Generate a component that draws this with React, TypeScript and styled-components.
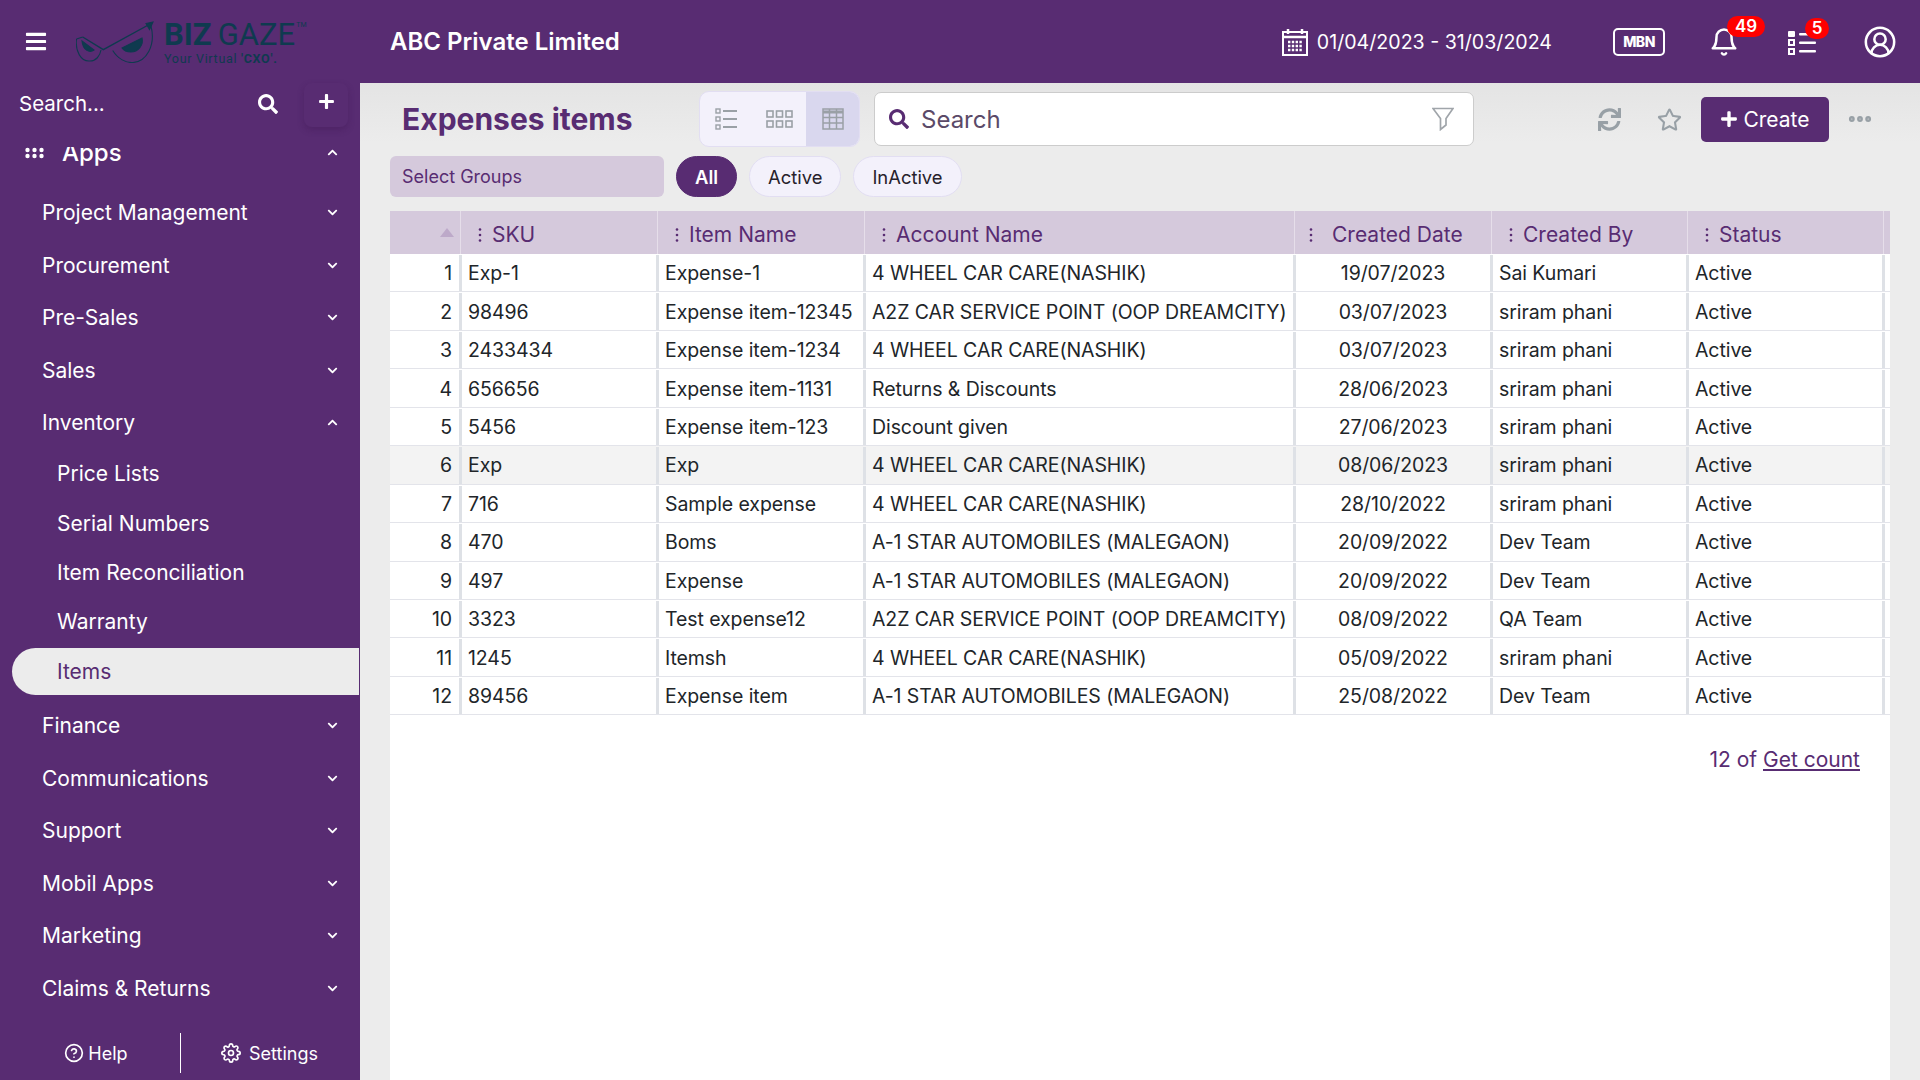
import React from 'react';
import styled, { createGlobalStyle } from 'styled-components';
import { FaBars, FaSearch, FaPlus, FaChevronDown, FaChevronUp, FaSync, FaRegStar } from 'react-icons/fa';
import { FiMoreHorizontal, FiHelpCircle, FiSettings } from 'react-icons/fi';
import { LuBell, LuCircleUserRound } from 'react-icons/lu';

const purple = '#582c72';
const lilac = '#d5c9dc';
const columns = '71px 197px 207px 430px 197px 196px 196px 6px';
const rowColumns = '71px 197px 207px 430px 197px 196px 196px 5px';

const GlobalStyle = createGlobalStyle`
  html, body { margin: 0; padding: 0; height: 100%; }
  body { font-family: Inter, "Noto Sans", sans-serif; overflow: hidden; }
  * { box-sizing: border-box; }
`;

const Page = styled.div`
  width: 1920px;
  height: 1080px;
  display: flex;
  flex-direction: column;
  background: ${purple};
  overflow: hidden;
`;

const TopBar = styled.header`
  height: 83px;
  flex: none;
  display: flex;
  align-items: center;
  padding-left: 25px;
  color: #fff;
`;

const Burger = styled.div`
  width: 22px;
  font-size: 23px;
  display: flex;
`;

const Logo = styled.div`
  width: 244px;
  margin-left: 29px;
  margin-right: 70px;
  display: flex;
  align-items: flex-start;
  gap: 8px;
  height: 42px;
`;

const LogoText = styled.div`
  color: #0f3a4f;
  font-family: Roboto, sans-serif;
`;

const LogoName = styled.div`
  font-size: 31px;
  line-height: 26px;
  margin-top: 1px;
  white-space: nowrap;
  b { font-weight: 700; margin-right: 6px; }
  span { font-weight: 400; }
  sup { font-size: 7px; line-height: 0; vertical-align: 18px; margin-left: 1px; }
`;

const LogoTag = styled.div`
  font-size: 12.5px;
  line-height: 14px;
  margin-top: 4px;
  letter-spacing: 0.7px;
  white-space: nowrap;
  b { font-weight: 700; }
`;

const Company = styled.div`
  font-size: 24px;
  font-weight: 600;
  flex: 1;
`;

const DateRange = styled.div`
  display: flex;
  align-items: center;
  gap: 9px;
  font-size: 19.6px;
  margin-right: 61px;
`;

const Mbn = styled.div`
  width: 52px;
  height: 28px;
  border: 2.5px solid #fff;
  border-radius: 5px;
  font-size: 14px;
  font-weight: 800;
  letter-spacing: -0.5px;
  display: flex;
  align-items: center;
  justify-content: center;
  margin-right: 44px;
`;

const IconSlot = styled.div<{ $gap: number }>`
  position: relative;
  display: flex;
  margin-right: ${p => p.$gap}px;
`;

const Badge = styled.span<{ $left: number; $width: number }>`
  position: absolute;
  top: -11px;
  left: ${p => p.$left}px;
  width: ${p => p.$width}px;
  height: 21px;
  background: #f00;
  border-radius: 11px;
  color: #fff;
  font-size: 17px;
  font-weight: 600;
  line-height: 21px;
  text-align: center;
`;

const Body = styled.div`
  flex: 1;
  display: flex;
  min-height: 0;
`;

const Sidebar = styled.aside`
  width: 360px;
  flex: none;
  display: flex;
  flex-direction: column;
  color: #fff;
  position: relative;
`;

const SideSearch = styled.div`
  height: 64px;
  flex: none;
  display: flex;
  align-items: flex-start;
  padding: 8px 12px 0 19px;
  font-size: 20.5px;
  position: relative;
  z-index: 1;
  background: ${purple};
`;

const SideSearchLabel = styled.div`
  flex: 1;
  line-height: 26px;
`;

const SideSearchIcon = styled.div`
  font-size: 20px;
  display: flex;
  margin: 3px 26px 0 0;
`;

const AddBox = styled.div`
  width: 44px;
  height: 44px;
  margin-top: -8px;
  border-radius: 8px;
  display: flex;
  align-items: center;
  justify-content: center;
  font-size: 17px;
  padding-bottom: 8px;
  box-shadow: 0 3px 6px rgba(60, 20, 80, 0.35);
`;

const NavScroll = styled.nav`
  flex: 1;
  min-height: 0;
  overflow: hidden;
`;

const NavList = styled.div`
  margin-top: -21px;
`;

const NavRow = styled.div`
  height: 52.5px;
  display: flex;
  align-items: center;
  padding: 0 22px 0 42px;
  font-size: 21px;
  svg { font-size: 11px; }
`;

const AppsRow = styled(NavRow)`
  margin-bottom: 8px;
  padding-left: 62px;
  font-size: 24px;
  font-weight: 500;
  position: relative;
`;

const NavLabel = styled.span`
  flex: 1;
`;

const AppsDots = styled.svg`
  position: absolute;
  left: 25px;
  top: 21px;
  width: 20px;
  height: 12px;
`;

const SubRow = styled.div<{ $active?: boolean }>`
  height: 49.4px;
  display: flex;
  align-items: center;
  font-size: 21px;
  padding-left: ${p => (p.$active ? 45 : 57)}px;
  ${p => p.$active && `
    margin: 1px 1px 5px 12px;
    height: 47px;
    background: #ececec;
    color: ${purple};
    border-radius: 24px 0 0 24px;
  `}
`;

const SideFooter = styled.div`
  position: absolute;
  left: 0;
  right: 0;
  bottom: 7px;
  height: 40px;
  background: ${purple};
  display: grid;
  grid-template-columns: 180px 1fr;
  font-size: 18px;
`;

const FooterItem = styled.div<{ $divider?: boolean }>`
  display: flex;
  align-items: center;
  justify-content: center;
  gap: ${p => (p.$divider ? 8 : 4)}px;
  padding: 0 ${p => (p.$divider ? 2 : 0)}px 0 ${p => (p.$divider ? 0 : 12)}px;
  border-left: ${p => (p.$divider ? '1px solid #fff' : 'none')};
  svg { font-size: 20px; }
`;

const Main = styled.main`
  flex: 1;
  min-width: 0;
  display: flex;
  flex-direction: column;
  padding: 8px 30px 0;
  background: linear-gradient(#e4e4e4, #ececec 60px);
`;

const TitleRow = styled.div`
  height: 56px;
  flex: none;
  display: flex;
  align-items: center;
`;

const Title = styled.h1`
  width: 309px;
  margin: 0;
  padding-left: 12px;
  font-size: 30px;
  font-weight: 700;
  color: ${purple};
  white-space: nowrap;
`;

const ViewToggle = styled.div`
  width: 161px;
  height: 56px;
  display: grid;
  grid-template-columns: 53px 53px 1fr;
  background: #f3f1fb;
  border: 1px solid #e2def2;
  border-radius: 10px;
  overflow: hidden;
  margin-right: 14px;
`;

const ViewButton = styled.div<{ $active?: boolean }>`
  display: flex;
  align-items: center;
  justify-content: center;
  background: ${p => (p.$active ? '#d9d7ee' : 'transparent')};
`;

const SearchBox = styled.div`
  width: 600px;
  height: 54px;
  background: #fff;
  border: 1px solid #ccc;
  border-radius: 7px;
  display: flex;
  align-items: center;
  padding: 0 19px 0 14px;
  color: ${purple};
  margin-right: 124px;
`;

const SearchLabel = styled.span`
  flex: 1;
  font-size: 24px;
  margin-left: 12px;
  color: #5b4a68;
`;

const ActionIcon = styled.div<{ $gap: number }>`
  display: flex;
  color: #98a0a6;
  margin-right: ${p => p.$gap}px;
`;

const CreateButton = styled.button`
  width: 128px;
  height: 45px;
  border: none;
  border-radius: 5px;
  background: ${purple};
  color: #fff;
  font-family: inherit;
  font-size: 21px;
  display: flex;
  align-items: center;
  justify-content: center;
  gap: 5px;
  margin-right: 17px;
  svg { font-size: 18px; }
`;

const FilterRow = styled.div`
  height: 41px;
  flex: none;
  margin-top: 9px;
  display: flex;
  gap: 12px;
`;

const GroupSelect = styled.div`
  width: 274px;
  background: ${lilac};
  border-radius: 6px;
  padding-left: 12px;
  display: flex;
  align-items: center;
  font-size: 18px;
  color: ${purple};
`;

const Pill = styled.div<{ $active?: boolean }>`
  padding: 0 ${p => (p.$active ? 18 : 18)}px;
  border-radius: 21px;
  display: flex;
  align-items: center;
  font-size: 18.4px;
  font-weight: ${p => (p.$active ? 600 : 400)};
  background: ${p => (p.$active ? purple : '#f3f1fb')};
  color: ${p => (p.$active ? '#fff' : '#27222b')};
  border: 1px solid ${p => (p.$active ? purple : '#e2def2')};
`;

const Panel = styled.section`
  flex: 1;
  margin-top: 14px;
  background: #fff;
`;

const HeadRow = styled.div`
  display: grid;
  grid-template-columns: ${columns};
  height: 43px;
  background: ${lilac};
`;

const HeadCell = styled.div<{ $gap?: number }>`
  display: flex;
  align-items: center;
  gap: ${p => p.$gap ?? 10}px;
  padding: 4px 0 0 ${p => (p.$gap ? 14 : 17)}px;
  border-right: 1px solid #e6deea;
  color: ${purple};
  font-size: 21px;
`;

const SortCell = styled.div`
  display: flex;
  align-items: center;
  justify-content: flex-end;
  padding-right: 6px;
  border-right: 1px solid #e6deea;
`;

const SortArrow = styled.div`
  width: 0;
  height: 0;
  border-left: 7px solid transparent;
  border-right: 7px solid transparent;
  border-bottom: 9px solid #bda9c9;
`;

const Kebab = styled.svg`
  width: 4px;
  height: 16px;
  flex: none;
`;

const DataRow = styled.div<{ $hover?: boolean }>`
  display: grid;
  grid-template-columns: ${rowColumns};
  height: 38.45px;
  padding: 1px 0 0 1px;
  border-bottom: 1px solid #e3e4ea;
  background: ${p => (p.$hover ? '#f3f3f3' : '#fff')};
`;

const Cell = styled.div<{ $align?: string }>`
  display: flex;
  align-items: center;
  justify-content: ${p => p.$align ?? 'flex-start'};
  padding: 0 ${p => (p.$align === 'flex-end' ? 7 : 0)}px 0 ${p => (p.$align ? 0 : 6)}px;
  border-right: 3px solid #dee1e6;
  color: #212529;
  font-size: 19.5px;
  white-space: nowrap;
  letter-spacing: -0.08px;
`;

const EndCell = styled.div``;

const Count = styled.div`
  margin-top: 32px;
  padding-right: 30px;
  text-align: right;
  font-size: 21px;
  color: ${purple};
  a { color: ${purple}; text-decoration: underline; }
`;

const topMenus = ['Project Management', 'Procurement', 'Pre-Sales', 'Sales'];
const subMenus = ['Price Lists', 'Serial Numbers', 'Item Reconciliation', 'Warranty'];
const bottomMenus = ['Finance', 'Communications', 'Support', 'Mobil Apps', 'Marketing', 'Claims & Returns'];

const rows = [
  ['Exp-1', 'Expense-1', '4 WHEEL CAR CARE(NASHIK)', '19/07/2023', 'Sai Kumari'],
  ['98496', 'Expense item-12345', 'A2Z CAR SERVICE POINT (OOP DREAMCITY)', '03/07/2023', 'sriram phani'],
  ['2433434', 'Expense item-1234', '4 WHEEL CAR CARE(NASHIK)', '03/07/2023', 'sriram phani'],
  ['656656', 'Expense item-1131', 'Returns & Discounts', '28/06/2023', 'sriram phani'],
  ['5456', 'Expense item-123', 'Discount given', '27/06/2023', 'sriram phani'],
  ['Exp', 'Exp', '4 WHEEL CAR CARE(NASHIK)', '08/06/2023', 'sriram phani'],
  ['716', 'Sample expense', '4 WHEEL CAR CARE(NASHIK)', '28/10/2022', 'sriram phani'],
  ['470', 'Boms', 'A-1 STAR AUTOMOBILES (MALEGAON)', '20/09/2022', 'Dev Team'],
  ['497', 'Expense', 'A-1 STAR AUTOMOBILES (MALEGAON)', '20/09/2022', 'Dev Team'],
  ['3323', 'Test expense12', 'A2Z CAR SERVICE POINT (OOP DREAMCITY)', '08/09/2022', 'QA Team'],
  ['1245', 'Itemsh', '4 WHEEL CAR CARE(NASHIK)', '05/09/2022', 'sriram phani'],
  ['89456', 'Expense item', 'A-1 STAR AUTOMOBILES (MALEGAON)', '25/08/2022', 'Dev Team'],
];

const KebabIcon = () => (
  <Kebab viewBox="0 0 4 16" fill={purple}>
    <circle cx="2" cy="2.5" r="1.3" />
    <circle cx="2" cy="8" r="1.3" />
    <circle cx="2" cy="13.5" r="1.3" />
  </Kebab>
);

const LogoMark = () => (
  <svg width="80" height="42" viewBox="0 0 80 42" fill="none" stroke="#0f3a4f" strokeWidth="1.1">
    <path d="M0.5 18 C-1 30 5 41 14 40 C20 40 24 35 25 29" />
    <path d="M0.5 18 L6.7 16" />
    <path d="M6 20 L18 29 C14 32 7 30 6 20 Z" fill="#0f3a4f" />
    <path d="M6.7 16 L27.3 28.7 L75 2.5" strokeWidth="1.4" />
    <path d="M70 2.5 L77 1 L73.5 8.5 Z" fill="#0f3a4f" />
    <path d="M36.7 29.5 C42 38 50 42 57 41.5 C70 41 80 25 75 5" />
    <path d="M46 27 L66 17 C68 24 62 31 55 31 C51 31 48 30 46 27 Z" fill="#0f3a4f" />
  </svg>
);

const CalendarIcon = () => (
  <svg width="26" height="28" viewBox="0 0 26 28" fill="none" stroke="#fff">
    <rect x="1" y="4" width="24" height="23" strokeWidth="2" />
    <path d="M1 9 H25" strokeWidth="2.5" />
    <path d="M6 1 V6 M20 1 V6" strokeWidth="2.5" />
    <path d="M6 14 H20 M6 18 H20 M6 22 H20" strokeWidth="2.4" strokeDasharray="2.4 1.4" />
  </svg>
);

const TaskIcon = () => (
  <svg width="28" height="26" viewBox="0 0 28 26" fill="#fff">
    <rect x="0" y="2" width="7" height="6" rx="1" />
    <rect x="1" y="11" width="5" height="5" fill="none" stroke="#fff" strokeWidth="2" />
    <rect x="1" y="20" width="5" height="5" fill="none" stroke="#fff" strokeWidth="2" />
    <rect x="11" y="4" width="15" height="2.6" rx="1" />
    <rect x="11" y="12.5" width="17" height="2.6" rx="1" />
    <rect x="11" y="21" width="17" height="2.6" rx="1" />
  </svg>
);

const ListViewIcon = () => (
  <svg width="23" height="22" viewBox="0 0 23 22" fill="none" stroke="#9aa0a6" strokeWidth="1.4">
    <rect x="1" y="1" width="4" height="4" />
    <rect x="1" y="9" width="4" height="4" />
    <rect x="1" y="17" width="4" height="4" />
    <path d="M8 3 H22 M8 11 H22 M8 19 H22" strokeWidth="1.8" />
  </svg>
);

const BoxViewIcon = () => (
  <svg width="27" height="20" viewBox="0 0 27 20" fill="none" stroke="#9aa0a6" strokeWidth="1.6">
    {[1, 10.5, 20].map(x =>
      [2, 12].map(y => <rect key={`${x}-${y}`} x={x} y={y} width="6" height="6" />)
    )}
  </svg>
);

const TableViewIcon = () => (
  <svg width="22" height="22" viewBox="0 0 22 22" fill="none" stroke="#9aa0a6" strokeWidth="1.5">
    <rect x="1" y="1" width="20" height="20" />
    <path d="M1 4 H21" strokeWidth="3" />
    <path d="M1 9.5 H21 M1 15 H21 M7.5 1 V21 M14.5 1 V21" />
  </svg>
);

const FunnelIcon = () => (
  <svg width="22" height="24" viewBox="0 0 22 24" fill="none" stroke="#a0a5aa" strokeWidth="1.7">
    <path d="M1 1.5 H21 L14 11.5 V18 L8.5 22.5 V11.5 Z" />
  </svg>
);

export default function App() {
  return (
    <Page>
      <GlobalStyle />
      <TopBar>
        <Burger><FaBars /></Burger>
        <Logo>
          <LogoMark />
          <LogoText>
            <LogoName><b>BIZ</b><span>GAZE</span><sup>TM</sup></LogoName>
            <LogoTag>Your Virtual <b>'CXO'.</b></LogoTag>
          </LogoText>
        </Logo>
        <Company>ABC Private Limited</Company>
        <DateRange><CalendarIcon />01/04/2023 - 31/03/2024</DateRange>
        <Mbn>MBN</Mbn>
        <IconSlot $gap={49}>
          <LuBell size={30} />
          <Badge $left={18} $width={38}>49</Badge>
        </IconSlot>
        <IconSlot $gap={47}>
          <TaskIcon />
          <Badge $left={17} $width={24}>5</Badge>
        </IconSlot>
        <IconSlot $gap={23}>
          <LuCircleUserRound size={34} strokeWidth={1.8} />
        </IconSlot>
      </TopBar>
      <Body>
        <Sidebar>
          <SideSearch>
            <SideSearchLabel>Search...</SideSearchLabel>
            <SideSearchIcon><FaSearch /></SideSearchIcon>
            <AddBox><FaPlus /></AddBox>
          </SideSearch>
          <NavScroll>
            <NavList>
              <AppsRow>
                <AppsDots viewBox="0 0 20 12" fill="#fff">
                  {[2.5, 9.5, 16.5].map(x => [3, 9].map(y => <circle key={`${x}-${y}`} cx={x} cy={y} r="2.2" />))}
                </AppsDots>
                <NavLabel>Apps</NavLabel><FaChevronUp />
              </AppsRow>
              {topMenus.map(m => (
                <NavRow key={m}><NavLabel>{m}</NavLabel><FaChevronDown /></NavRow>
              ))}
              <NavRow><NavLabel>Inventory</NavLabel><FaChevronUp /></NavRow>
              {subMenus.map(m => <SubRow key={m}>{m}</SubRow>)}
              <SubRow $active>Items</SubRow>
              {bottomMenus.map(m => (
                <NavRow key={m}><NavLabel>{m}</NavLabel><FaChevronDown /></NavRow>
              ))}
            </NavList>
          </NavScroll>
          <SideFooter>
            <FooterItem><FiHelpCircle />Help</FooterItem>
            <FooterItem $divider><FiSettings />Settings</FooterItem>
          </SideFooter>
        </Sidebar>
        <Main>
          <TitleRow>
            <Title>Expenses items</Title>
            <ViewToggle>
              <ViewButton><ListViewIcon /></ViewButton>
              <ViewButton><BoxViewIcon /></ViewButton>
              <ViewButton $active><TableViewIcon /></ViewButton>
            </ViewToggle>
            <SearchBox>
              <FaSearch size={20} />
              <SearchLabel>Search</SearchLabel>
              <FunnelIcon />
            </SearchBox>
            <ActionIcon $gap={36}><FaSync size={23} /></ActionIcon>
            <ActionIcon $gap={19}><FaRegStar size={25} /></ActionIcon>
            <CreateButton><FaPlus />Create</CreateButton>
            <ActionIcon $gap={0}><FiMoreHorizontal size={28} strokeWidth={3} /></ActionIcon>
          </TitleRow>
          <FilterRow>
            <GroupSelect>Select Groups</GroupSelect>
            <Pill $active>All</Pill>
            <Pill>Active</Pill>
            <Pill>InActive</Pill>
          </FilterRow>
          <Panel>
            <HeadRow>
              <SortCell><SortArrow /></SortCell>
              <HeadCell><KebabIcon />SKU</HeadCell>
              <HeadCell><KebabIcon />Item Name</HeadCell>
              <HeadCell><KebabIcon />Account Name</HeadCell>
              <HeadCell $gap={19}><KebabIcon />Created Date</HeadCell>
              <HeadCell><KebabIcon />Created By</HeadCell>
              <HeadCell><KebabIcon />Status</HeadCell>
              <EndCell />
            </HeadRow>
            {rows.map((r, i) => (
              <DataRow key={i} $hover={i === 5}>
                <Cell $align="flex-end">{i + 1}</Cell>
                <Cell>{r[0]}</Cell>
                <Cell>{r[1]}</Cell>
                <Cell>{r[2]}</Cell>
                <Cell $align="center">{r[3]}</Cell>
                <Cell>{r[4]}</Cell>
                <Cell>Active</Cell>
                <EndCell />
              </DataRow>
            ))}
            <Count>12 of <a>Get count</a></Count>
          </Panel>
        </Main>
      </Body>
    </Page>
  );
}
